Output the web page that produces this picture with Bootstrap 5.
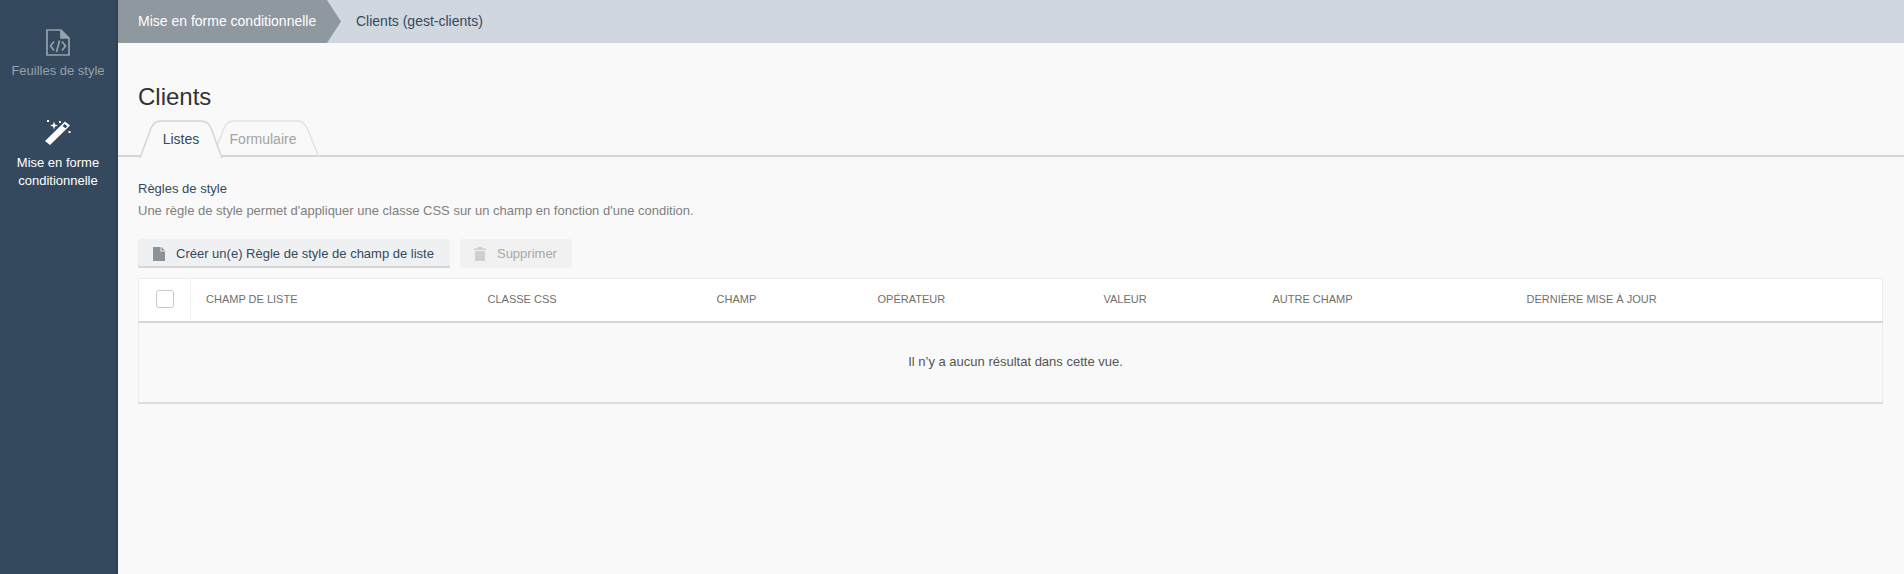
<!DOCTYPE html>
<html lang="fr">
<head>
  <meta charset="UTF-8" />
  <meta name="viewport" content="width=device-width, initial-scale=1.0" />
  <title>Clients</title>
  <link href="https://cdn.jsdelivr.net/npm/bootstrap@5.3.3/dist/css/bootstrap.min.css" rel="stylesheet" />
  <style>
    html, body { height: 100%; }
    body {
      font-family: "Liberation Sans", Arial, sans-serif;
      font-size: 13px;
      color: #34495e;
      background: #f9f9f9;
      overflow: hidden;
    }
    .app-shell { height: 574px; }

    /* Sidebar */
    .side-menu {
      width: 118px;
      flex: none;
      background: #34495e;
      box-shadow: inset -3px 0 3px -2px rgba(0, 0, 0, .2);
      padding: 29px 2px 0 0;
    }
    .side-item {
      display: block;
      text-align: center;
      text-decoration: none;
      line-height: 18px;
      color: #95a1ad;
      margin-bottom: 40px;
    }
    .side-item svg { display: block; margin: 0 auto 6px; }
    .side-item.is-current { color: #fff; }
    .side-item.is-current svg { margin-bottom: 9px; }

    /* Breadcrumb */
    .crumb-bar { height: 43px; background: #d0d7de; flex: none; }
    .crumb-first {
      width: 223px;
      padding-left: 20px;
      line-height: 43px;
      color: #fff;
      background: #8f979f;
      clip-path: polygon(0 0, 209px 0, 223px 50%, 209px 100%, 0 100%);
      font-size: 14px;
    }
    .crumb-second {
      padding-left: 15px;
      line-height: 43px;
      font-size: 14px;
      color: #34495e;
    }

    /* Page */
    .page-title {
      font-size: 24px;
      font-weight: 400;
      line-height: 28px;
      color: #333;
      margin: 40px 0 0 20px;
    }
    .tab-row {
      display: flex;
      height: 37px;
      margin-top: 9px;
      padding-left: 21px;
      border-bottom: 2px solid #d5d5d5;
    }
    .tab-item {
      position: relative;
      display: block;
      height: 37px;
      font-size: 14px;
      line-height: 39px;
      text-align: center;
      text-decoration: none;
      color: #a3a3a3;
    }
    .tab-item span { position: relative; }
    .tab-item svg { position: absolute; left: 0; top: 0; }
    .tab-one { width: 84px; z-index: 1; color: #34495e; }
    .tab-two { width: 108px; margin-left: -11px; padding-right: 6px; }

    .rule-section { padding: 0 21px 0 20px; }
    .rule-title { margin: 23px 0 0; line-height: 18px; color: #34495e; }
    .rule-help { margin: 4px 0 0; line-height: 18px; color: #7f7f7f; }

    .action-row { margin: 19px 0 10px; gap: 10px; }
    .action-btn {
      display: inline-flex;
      align-items: center;
      height: 29px;
      border: 0;
      border-radius: 2px;
      font-size: 13px;
    }
    .action-create {
      padding: 0 16px 0 15px;
      background: #eff0f2;
      color: #34495e;
      box-shadow: inset 0 -2px 0 #d5d5d5;
    }
    .action-delete { padding: 0 15px 0 14px; background: #f1f1f1; color: #a8a8a8; }
    .action-btn svg { margin-right: 11px; }

    .rule-table {
      width: 100%;
      table-layout: fixed;
      margin: 0;
      border: 1px solid #ededed;
      border-bottom: 2px solid #dedede;
    }
    .rule-table th {
      height: 43px;
      background: #fff;
      border-bottom: 2px solid #d0d7de;
      font-size: 11px;
      font-weight: 400;
      text-transform: uppercase;
      color: #6f6f6f;
      vertical-align: middle;
      padding: 0 0 2px 15px;
    }
    .rule-table th.check-cell { border-right: 1px solid #ededed; padding: 0 0 2px; }
    .fake-check {
      display: block;
      width: 18px;
      height: 18px;
      margin: 0 auto;
      background: #fff;
      border: 1px solid #c9c9c9;
      border-radius: 3px;
    }
    .empty-cell {
      height: 81px;
      padding-left: 11px;
      text-align: center;
      vertical-align: middle;
      color: #555;
      background: #f9f9f9;
    }
  </style>
</head>
<body>
  <div class="app-shell d-flex">
    <!-- Sidebar -->
    <nav class="side-menu">
      <a class="side-item" href="#">
        <svg width="24" height="27" viewBox="0 0 24 27" fill="none" stroke="#95a1ad" stroke-width="1.7">
          <path d="M1 1H15L23 9V26H1Z" />
          <path d="M15 1V9H23" fill="#95a1ad" />
          <path d="M8 12.5L4.5 17L8 21.5M16 12.5L19.5 17L16 21.5M13.5 11.5L10.5 23" />
        </svg>
        Feuilles de style
      </a>
      <a class="side-item is-current" href="#">
        <svg width="26" height="25" viewBox="0 0 26 25" fill="#fff">
          <path d="M20 1.5L25 5.5L5 25L0 21Z" />
          <path d="M19.6 4L22.4 6.3L20.4 8.2L17.6 5.9Z" fill="#34495e" />
          <path d="M9 1.5L10 4.5L13 5.5L10 6.5L9 9.5L8 6.5L5 5.5L8 4.5Z" />
          <path d="M2 0h2v2H2zM14 1h2v2h-2zM23.5 11h2v2h-2z" />
        </svg>
        Mise en forme conditionnelle
      </a>
    </nav>

    <div class="flex-grow-1 d-flex flex-column">
      <!-- Breadcrumb -->
      <div class="crumb-bar d-flex">
        <div class="crumb-first">Mise en forme conditionnelle</div>
        <div class="crumb-second">Clients (gest-clients)</div>
      </div>

      <h1 class="page-title">Clients</h1>

      <!-- Tabs -->
      <div class="tab-row">
        <a class="tab-item tab-one" href="#">
          <svg width="84" height="38" viewBox="0 0 84 38">
            <path d="M1 38L12 8Q15 1 22 1H62Q69 1 72 8L83 38Z" fill="#f9f9f9" stroke="#d5d5d5" stroke-width="1.5" />
            <path d="M2 36.5H82V38H2Z" fill="#f9f9f9" />
          </svg>
          <span>Listes</span>
        </a>
        <a class="tab-item tab-two" href="#">
          <svg width="108" height="37" viewBox="0 0 108 37">
            <path d="M1 37L12 8Q15 1 22 1H85Q92 1 95 8L107 37" fill="none" stroke="#e2e2e2" stroke-width="1.5" />
          </svg>
          <span>Formulaire</span>
        </a>
      </div>

      <section class="rule-section">
        <p class="rule-title">Règles de style</p>
        <p class="rule-help">Une règle de style permet d'appliquer une classe CSS sur un champ en fonction d'une condition.</p>

        <div class="action-row d-flex">
          <button class="action-btn action-create" type="button">
            <svg width="12" height="14" viewBox="0 0 12 14" fill="#8a929a"><path d="M0 0H7.5V4.5H12V14H0ZM8.5 0L12 3.5H8.5Z" /></svg>
            Créer un(e) Règle de style de champ de liste
          </button>
          <button class="action-btn action-delete" type="button">
            <svg width="12" height="14" viewBox="0 0 12 14" fill="#cfcfcf"><path d="M4 0H8V1.5H12V3H0V1.5H4ZM1 4H11V14H1Z" /></svg>
            Supprimer
          </button>
        </div>

        <table class="rule-table">
          <colgroup>
            <col style="width: 52px" />
            <col style="width: 282px" />
            <col style="width: 229px" />
            <col style="width: 161px" />
            <col style="width: 226px" />
            <col style="width: 169px" />
            <col style="width: 254px" />
            <col />
          </colgroup>
          <thead>
            <tr>
              <th class="check-cell"><span class="fake-check"></span></th>
              <th>Champ de liste</th>
              <th>Classe CSS</th>
              <th>Champ</th>
              <th>Opérateur</th>
              <th>Valeur</th>
              <th>Autre champ</th>
              <th>Dernière mise à jour</th>
            </tr>
          </thead>
          <tbody>
            <tr><td class="empty-cell" colspan="8">Il n’y a aucun résultat dans cette vue.</td></tr>
          </tbody>
        </table>
      </section>
    </div>
  </div>

  <script src="https://cdn.jsdelivr.net/npm/bootstrap@5.3.3/dist/js/bootstrap.bundle.min.js"></script>
</body>
</html>
